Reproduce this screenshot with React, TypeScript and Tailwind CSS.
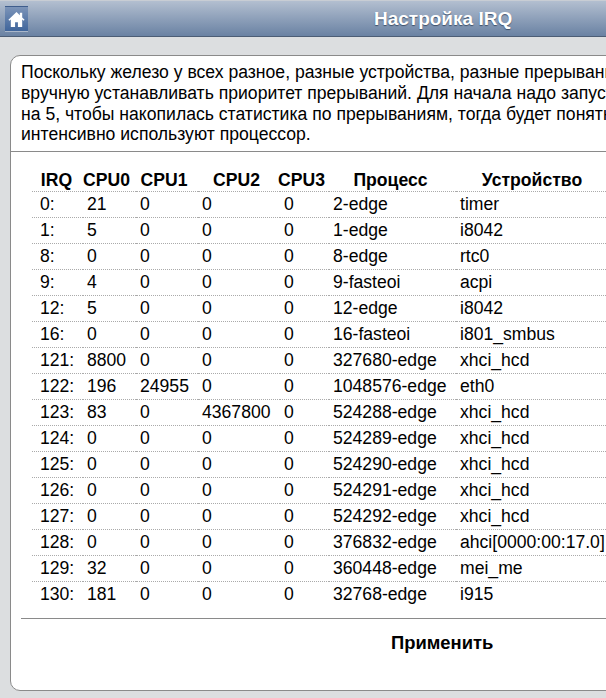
const rows = [
  ['0:', '21', '0', '0', '0', '2-edge', 'timer'],
  ['1:', '5', '0', '0', '0', '1-edge', 'i8042'],
  ['8:', '0', '0', '0', '0', '8-edge', 'rtc0'],
  ['9:', '4', '0', '0', '0', '9-fasteoi', 'acpi'],
  ['12:', '5', '0', '0', '0', '12-edge', 'i8042'],
  ['16:', '0', '0', '0', '0', '16-fasteoi', 'i801_smbus'],
  ['121:', '8800', '0', '0', '0', '327680-edge', 'xhci_hcd'],
  ['122:', '196', '24955', '0', '0', '1048576-edge', 'eth0'],
  ['123:', '83', '0', '4367800', '0', '524288-edge', 'xhci_hcd'],
  ['124:', '0', '0', '0', '0', '524289-edge', 'xhci_hcd'],
  ['125:', '0', '0', '0', '0', '524290-edge', 'xhci_hcd'],
  ['126:', '0', '0', '0', '0', '524291-edge', 'xhci_hcd'],
  ['127:', '0', '0', '0', '0', '524292-edge', 'xhci_hcd'],
  ['128:', '0', '0', '0', '0', '376832-edge', 'ahci[0000:00:17.0]'],
  ['129:', '32', '0', '0', '0', '360448-edge', 'mei_me'],
  ['130:', '181', '0', '0', '0', '32768-edge', 'i915'],
];

const headers = [
  { label: 'IRQ', className: 'w-[51px] pr-[2px]' },
  { label: 'CPU0', className: 'w-[53px] pr-[6px]' },
  { label: 'CPU1', className: 'w-[62px] pr-[6px]' },
  { label: 'CPU2', className: 'w-[82px] pr-[5px]' },
  { label: 'CPU3', className: 'w-[49px] pr-2 indent-[-2px]' },
  { label: 'Процесс', className: 'w-[127px] pr-1' },
  { label: 'Устройство', className: 'w-[156px] pr-1' },
];

export default function App() {
  return (
    <div className="h-[698px] w-[606px] overflow-hidden bg-[#dcdee0] font-['Liberation_Sans',Arial,sans-serif] text-black">
      <header className="relative h-[37px] w-[606px] border-t border-t-[#c8cdd4] border-b border-b-[#4c5d75] bg-gradient-to-b from-[#b3bfd0] to-[#6a82a3]">
        <a className="absolute left-[5px] top-[5px] flex h-[26px] w-[23px] items-center justify-center border-t border-b border-t-[#3f5d8c] border-b-[#a9b6c9] bg-gradient-to-b from-[#7c94b8] to-[#3f659b]">
          <svg viewBox="0 0 20 20" className="h-[19px] w-[19px]" fill="#fff">
            <path d="M10 2 1.500 10.200l1 1L4 9.900V18h4.500v-5h3v5H16V9.900l1.500 1.300 1-1L16 7.800V3h-2.500v2.400z" />
          </svg>
        </a>
        <h1 className="pt-[7px] pl-[374px] text-[19px] leading-[22px] font-bold text-white [text-shadow:0_1px_1px_#3d4f68]">
          Настройка IRQ
        </h1>
      </header>

      <main className="mt-[18px] ml-[10px] h-[636px] w-[640px] rounded-[10px] border border-[#8a8a8a] bg-white">
        <p className="h-[95px] w-[629px] overflow-hidden pt-[6px] pl-[10px] text-[17.6px] leading-[20.8px] whitespace-nowrap">
          Поскольку железо у всех разное, разные устройства, разные прерывания
          <br />
          вручную устанавливать приоритет прерываний. Для начала надо запустить
          <br />
          на 5, чтобы накопилась статистика по прерываниям, тогда будет понятно
          <br />
          интенсивно используют процессор.
        </p>
        <div className="border-t border-[#8a8a8a] pt-[12px]">
          <table className="ml-[21px] w-[580px] table-fixed border-collapse text-[17.6px] leading-[25px]">
            <thead>
              <tr className="border-b border-dotted border-[#aaaaaa]">
                {headers.map((h) => (
                  <th key={h.label} className={`${h.className} pt-[5px] pl-0 text-center leading-[22px] font-bold whitespace-nowrap`}>
                    {h.label}
                  </th>
                ))}
              </tr>
            </thead>
            <tbody>
              {rows.map((row) => (
                <tr key={row[0]} className="border-b border-dotted border-[#aaaaaa] last:border-b-0">
                  {row.map((cell, i) => (
                    <td key={i} className={i === 0 ? 'pl-2 whitespace-nowrap' : 'pl-1 whitespace-nowrap'}>
                      {cell}
                    </td>
                  ))}
                </tr>
              ))}
            </tbody>
          </table>
        </div>
        <div className="mt-[11px] ml-[10px] border-t border-[#8a8a8a] pt-[13px] pl-[370px] text-[18.4px] leading-[22px] font-bold">
          Применить
        </div>
      </main>
    </div>
  );
}
